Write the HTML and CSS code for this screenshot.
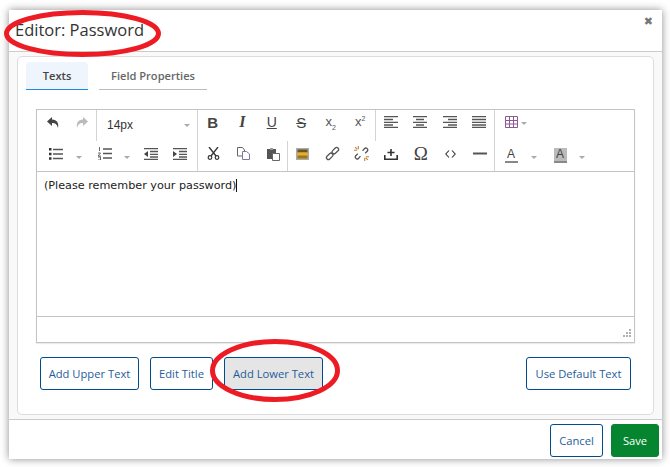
FILE: index.html
```html
<!DOCTYPE html>
<html lang="en">
<head>
<meta charset="utf-8">
<title>Editor: Password</title>
<link rel="stylesheet" href="styles.css">
</head>
<body>
<div class="dialog">
  <header class="head">
    <h1 class="title">Editor: Password</h1>
    <span class="close">✖</span>
  </header>
  <main class="body">
    <section class="panel">
      <nav class="tabs">
        <span class="tab tab-on">Texts</span>
        <span class="tab tab-off">Field Properties</span>
      </nav>
      <div class="editor">
        <div class="toolbar">
          <div class="row row-a">
            <div class="grp g59">
              <span class="cell c29"><svg width="14" height="13" viewBox="0 0 14 13"><path d="M6 1 1 5.500 6 10V7c3 0 5 1 6 5 1-5-1-8-6-8.500z" fill="#444"/></svg></span>
              <span class="cell c29"><svg width="14" height="13" viewBox="0 0 14 13"><path d="M8 1l5 4.500L8 10V7c-3 0-5 1-6 5-1-5 1-8 6-8.500z" fill="#bbb"/></svg></span>
            </div>
            <div class="grp g101 sel"><span class="size">14px</span><i class="caret size-caret"></i></div>
            <div class="grp g178">
              <span class="cell c29-6 b">B</span>
              <span class="cell c29-6 i">I</span>
              <span class="cell c29-6 u">U</span>
              <span class="cell c29-6 s">S</span>
              <span class="cell c29-6 sc"><span>x<sub>2</sub></span></span>
              <span class="cell c29-6 sc"><span>x<sup>2</sup></span></span>
            </div>
            <div class="grp g119">
              <span class="cell c29-7"><svg width="14" height="12" viewBox="0 0 14 12"><path d="M0 .7h14M0 3.500h9M0 6.300h14M0 9h9M0 11.300h14" stroke="#555" stroke-width="1.300"/></svg></span>
              <span class="cell c29-7"><svg width="14" height="12" viewBox="0 0 14 12"><path d="M0 .7h14M3 3.500h8M0 6.300h14M3 9h8M0 11.300h14" stroke="#555" stroke-width="1.300"/></svg></span>
              <span class="cell c29-7"><svg width="14" height="12" viewBox="0 0 14 12"><path d="M0 .7h14M5 3.500h9M0 6.300h14M5 9h9M0 11.300h14" stroke="#555" stroke-width="1.300"/></svg></span>
              <span class="cell c29-7"><svg width="14" height="12" viewBox="0 0 14 12"><path d="M0 .7h14M0 3.500h14M0 6.300h14M0 9h14M0 11.300h14" stroke="#555" stroke-width="1.300"/></svg></span>
            </div>
            <div class="grp last">
              <span class="cell ctable"><svg width="13" height="12" viewBox="0 0 13 12"><path d="M.5.500h12v11H.5zM4.500.500v11M8.500.500v11M.5 4.500h12M.5 8h12" fill="none" stroke="#8a5a90"/></svg><i class="caret table-caret"></i></span>
            </div>
          </div>
          <div class="row row-b">
            <div class="grp g160">
              <span class="cell c18"><svg width="14" height="12" viewBox="0 0 14 12"><path d="M4 1.500h10M4 6h10M4 10.500h10" stroke="#555" stroke-width="1.300"/><path d="M0 0h2.500v2.500H0zM0 4.700h2.500v2.500H0zM0 9.300h2.500v2.500H0z" fill="#333"/></svg></span>
              <i class="caret bullet-caret"></i>
              <span class="cell c18 num"><svg width="14" height="13" viewBox="0 0 14 13"><path d="M5 2h9M5 6.500h9M5 11h9" stroke="#555" stroke-width="1.300"/><path d="M1.500 0v4M0 6h2.500L0 9h3M0 10h2.500v3H0" fill="none" stroke="#444" stroke-width=".8"/></svg></span>
              <i class="caret num-caret"></i>
              <span class="cell c29 outd"><svg width="14" height="12" viewBox="0 0 14 12"><path d="M0 .7h14M6 3.500h8M6 6.300h8M6 9h8M0 11.300h14" stroke="#555" stroke-width="1.300"/><path d="M4 3v6L0 6z" fill="#444"/></svg></span>
              <span class="cell c29"><svg width="14" height="12" viewBox="0 0 14 12"><path d="M0 .7h14M6 3.500h8M6 6.300h8M6 9h8M0 11.300h14" stroke="#555" stroke-width="1.300"/><path d="M0 3v6l4-3z" fill="#444"/></svg></span>
            </div>
            <div class="grp g90">
              <span class="cell c30"><svg width="13" height="13" viewBox="0 0 13 13"><path d="M2 0l7 9M11 0L4 9" stroke="#333" stroke-width="1.300"/><circle cx="3" cy="10.500" r="1.800" fill="none" stroke="#333" stroke-width="1.200"/><circle cx="10" cy="10.500" r="1.800" fill="none" stroke="#333" stroke-width="1.200"/></svg></span>
              <span class="cell c30"><svg width="13" height="13" viewBox="0 0 13 13"><path d="M.5.500h5l2 2.500v6h-7z" fill="#fff" stroke="#666"/><path d="M5.500 4.500h4l3 2.500v5.500h-7z" fill="#fff" stroke="#7a7aa0"/></svg></span>
              <span class="cell c30"><svg width="13" height="14" viewBox="0 0 13 14"><path d="M0 2h9v10H0z" fill="#555"/><path d="M3 1h3v2H3z" fill="#999"/><path d="M5.500 6.500h7v7h-7z" fill="#fff" stroke="#666"/></svg></span>
            </div>
            <div class="grp g207">
              <span class="cell c29-6"><svg width="13" height="12" viewBox="0 0 13 12"><path d="M0 0h13v12H0z" fill="#aaa"/><path d="M1.500 1.500h10v3H1.500z" fill="#6a5420"/><path d="M1.500 4.500h10v3H1.500z" fill="#eeb020"/><path d="M1.500 7.500h10v3H1.500z" fill="#a07810"/></svg></span>
              <span class="cell c29-6"><svg width="15" height="15" viewBox="0 0 14 14"><g fill="none" stroke="#555" stroke-width="1.200"><rect x="-3" y="-1.800" width="7" height="3.600" rx="1.800" transform="translate(4 10) rotate(-45)"/><rect x="-4" y="-1.800" width="7" height="3.600" rx="1.800" transform="translate(10 4) rotate(-45)"/></g></svg></span>
              <span class="cell c29-6"><svg width="15" height="15" viewBox="0 0 14 14"><g fill="none" stroke="#555" stroke-width="1.200"><path d="M6 9.500l-2 2.300a1.800 1.800 0 0 1-2.500-2.500l2-2"/><path d="M8 4.500l2-2.300a1.800 1.800 0 0 1 2.500 2.500l-2 2"/></g><path d="M4 0v3M0 4h3M10 11v3M11 10h3M1 1l2 2M11 11l2 2" stroke="#c08030"/></svg></span>
              <span class="cell c29-6"><svg width="14" height="12" viewBox="0 0 14 12"><path d="M.8 7v4.200h12.400V7" fill="none" stroke="#333" stroke-width="1.600"/><path d="M7 1v7M3.500 4.500h7" stroke="#333" stroke-width="1.600"/></svg></span>
              <span class="cell c29-6 omega">Ω</span>
              <span class="cell c29-6"><svg width="11" height="8" viewBox="0 0 11 8"><path d="M4 .5.800 4 4 7.500M7 .5 10.200 4 7 7.500" fill="none" stroke="#333" stroke-width="1.100"/></svg></span>
              <span class="cell c29-6"><svg width="14" height="3" viewBox="0 0 14 3"><path d="M0 1.500h14" stroke="#555" stroke-width="2"/></svg></span>
            </div>
            <div class="grp last">
              <span class="colour">A</span><i class="caret caret-a"></i>
              <span class="colour colour-bg">A</span><i class="caret caret-b"></i>
            </div>
          </div>
        </div>
        <div class="content"><span class="typed">(Please remember your password)</span></div>
        <div class="status"><svg class="grip" width="8" height="8" viewBox="0 0 8 8"><path d="M6 0h2v2H6zM3 3h2v2H3zM6 3h2v2H6zM0 6h2v2H0zM3 6h2v2H3zM6 6h2v2H6z" fill="#aab5a8"/></svg></div>
      </div>
      <div class="actions">
        <button class="btn w99">Add Upper Text</button>
        <button class="btn w63">Edit Title</button>
        <button class="btn w99 active">Add Lower Text</button>
        <button class="btn w105 push">Use Default Text</button>
      </div>
    </section>
  </main>
  <footer class="foot">
    <button class="btn w53">Cancel</button>
    <button class="btn save">Save</button>
  </footer>
</div>
<svg class="marks" width="670" height="467" viewBox="0 0 670 467">
  <ellipse cx="82.500" cy="33.500" rx="76" ry="21" fill="none" stroke="#ed1c24" stroke-width="5"/>
  <ellipse cx="275" cy="370.500" rx="62.500" ry="29" fill="none" stroke="#ed1c24" stroke-width="5"/>
</svg>
</body>
</html>
```
FILE: styles.css
```css
* { box-sizing: border-box; }
html, body { margin: 0; height: 100%; background: #fff; }
body {
  width: 670px;
  height: 467px;
  padding: 10px 8px 8px 9px;
  overflow: hidden;
  position: relative;
  font-family: "Open Sans", sans-serif;
  color: #333;
}
.dialog {
  width: 653px;
  height: 449px;
  background: #fff;
  display: flex;
  flex-direction: column;
  box-shadow: 0 0 8px rgba(0,0,0,.45);
}
.head {
  height: 42px;
  flex: none;
  display: flex;
  justify-content: space-between;
  border-bottom: 1px solid #ccc;
  padding: 0 9px 0 6px;
}
.title {
  margin: 0;
  font-size: 16.500px;
  line-height: 40px;
  font-weight: 400;
  color: #333;
}
.close {
  font-size: 11px;
  line-height: 12px;
  margin-top: 6px;
  color: #777;
  font-family: "DejaVu Sans", sans-serif;
}
.body {
  height: 368px;
  flex: none;
  background: #f9f9f9;
  border-bottom: 1px solid #ccc;
  padding: 4px 8px 4px 8px;
}
.panel {
  height: 359px;
  background: #fff;
  border: 1px solid #ddd;
  border-radius: 5px;
  padding: 5px 17px 0 8px;
}
.tabs {
  display: flex;
  gap: 11px;
  height: 28px;
  font-size: 11.100px;
  font-weight: 600;
}
.tab { height: 28px; line-height: 27px; text-align: center; }
.tab-on {
  width: 62px;
  background: #eef5fc;
  border-bottom: 1px solid #1c8ae4;
  border-radius: 4px 4px 0 0;
  color: #444;
}
.tab-off {
  width: 108px;
  border-bottom: 1px solid #bbb;
  color: #666;
}
.editor {
  margin: 19px 0 0 10px;
  width: 599px;
  height: 234px;
  border: 1px solid #c4c4c4;
  display: flex;
  flex-direction: column;
  box-shadow: 0 1px 1px rgba(0,0,0,.08);
}
.toolbar {
  height: 62px;
  flex: none;
  padding-left: 1px;
  border-bottom: 1px solid #c4c4c4;
}
.row { height: 30.500px; display: flex; }
.grp { display: flex; align-items: center; height: 100%; border-right: 1px solid #d4d4d4; flex: none; }
.row-a .cell { height: 24px; align-self: flex-start; }
.row-b .cell { height: 26px; align-self: flex-start; }
.g59 { width: 59px; }
.g101 { width: 101px; }
.g178 { width: 178px; }
.g119 { width: 119px; }
.g160 { width: 160px; }
.g90 { width: 90px; }
.g207 { width: 207px; }
.last { border-right: 0; flex: 1; }
.cell { display: flex; align-items: center; justify-content: center; flex: none; }
.c29 { width: 29px; }
.c29-6 { width: 29.500px; }
.c29-7 { width: 29.500px; }
.c30 { width: 30px; }
.c18 { width: 18px; margin-left: 9px; }
.num { margin-left: 14.500px; }
.outd { margin-left: 7px; }
.ctable { width: 40px; margin-left: 10px; justify-content: flex-start; }
.sel { padding-left: 10px; font-family: "Liberation Sans", sans-serif; font-size: 12px; }
.size { color: #333; }
.caret {
  display: block;
  width: 0;
  height: 0;
  flex: none;
  border-left: 3.500px solid transparent;
  border-right: 3.500px solid transparent;
  border-top: 3.500px solid #aaa;
}
.size-caret { margin-left: 51px; }
.table-caret { margin-left: 3px; margin-top: 3px; }
.bullet-caret { margin-left: 10.500px; margin-top: 3px; }
.num-caret { margin-left: 9.500px; margin-top: 3px; }
.caret-a { margin: 4px 0 0 13px; }
.caret-b { margin: 4px 0 0 12px; }
.b, .i, .u, .s { font-family: "Liberation Sans", sans-serif; font-size: 14px; color: #444; }
.b { font-weight: 700; font-size: 15px; }
.i { font-family: "Liberation Serif", serif; font-style: italic; font-weight: 700; font-size: 16px; }
.u { text-decoration: underline; }
.s { text-decoration: line-through; font-size: 15px; }
.sc { font-family: "Liberation Sans", sans-serif; font-size: 13px; color: #555; line-height: 14px; }
.sc sub, .sc sup { font-size: 7px; line-height: 0; }
.omega { font-family: "Liberation Serif", serif; font-size: 19px; color: #444; }
.colour {
  width: 13px;
  height: 15px;
  margin-left: 9.500px;
  font-family: "Liberation Sans", sans-serif;
  font-size: 12px;
  line-height: 13px;
  text-align: center;
  color: #444;
  border-bottom: 2px solid #888;
  flex: none;
}
.colour-bg { margin-left: 17px; background: #bbb; }
.content {
  flex: 1;
  padding: 7px;
  font-family: "DejaVu Sans", sans-serif;
  font-size: 11.200px;
  line-height: 14px;
  color: #222;
}
.typed { border-right: 1px solid #111; }
.status {
  height: 26px;
  flex: none;
  border-top: 1px solid #c4c4c4;
  display: flex;
  justify-content: flex-end;
  align-items: flex-end;
  padding: 0 3px 5px 0;
}
.actions {
  display: flex;
  gap: 11px;
  margin: 14px 0 0 14px;
  width: 591px;
}
.btn {
  height: 33px;
  padding: 0;
  background: #fff;
  border: 1px solid #004c8c;
  border-radius: 3px;
  color: #1f5c99;
  font-family: "Open Sans", sans-serif;
  font-size: 11.200px;
  flex: none;
}
.w99 { width: 99px; }
.w63 { width: 63px; }
.w105 { width: 105px; }
.w53 { width: 53px; }
.active { background: #e5e5e5; }
.push { margin-left: auto; }
.foot {
  flex: 1;
  display: flex;
  justify-content: flex-end;
  gap: 8px;
  padding: 4px 3px 0 0;
}
.save { width: 48px; background: #05852f; border-color: #05852f; color: #fff; }
.marks { position: absolute; left: 0; top: 0; pointer-events: none; }
```
